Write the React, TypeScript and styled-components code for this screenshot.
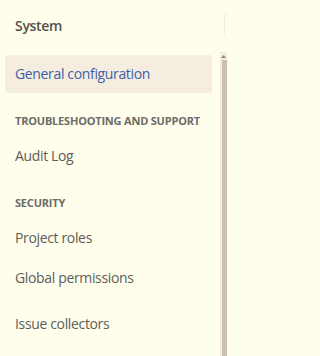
import styled, { createGlobalStyle } from 'styled-components';

const GlobalStyle = createGlobalStyle`
  html, body {
    margin: 0;
    padding: 0;
    background: #fffdec;
  }
  body {
    font-family: "Open Sans", "Noto Sans", sans-serif;
    overflow: hidden;
  }
`;

const Page = styled.div`
  display: flex;
  width: 227px;
  height: 356px;
  background: #fffdec;
  overflow: hidden;
`;

const Sidebar = styled.nav`
  width: 207px;
  flex-shrink: 0;
  padding: 16px 0 0 5px;
  display: flex;
  flex-direction: column;
`;

const Title = styled.div`
  height: 20px;
  line-height: 20px;
  padding-left: 10px;
  margin-bottom: 19px;
  font-size: 14px;
  font-weight: 600;
  letter-spacing: -0.3px;
  color: #52524e;
`;

const Group = styled.div<{ $gap: number }>`
  display: flex;
  flex-direction: column;
  gap: 2px;
  margin-top: ${(p) => p.$gap}px;
`;

const GroupHeading = styled.div`
  height: 16px;
  line-height: 16px;
  padding-left: 10px;
  margin-bottom: 6px;
  font-size: 11px;
  font-weight: 700;
  letter-spacing: -0.2px;
  color: #6c6b66;
  text-transform: uppercase;
  white-space: nowrap;
`;

const Item = styled.a<{ $selected?: boolean }>`
  display: flex;
  align-items: center;
  height: 38px;
  padding: 0 10px;
  border-radius: 3px;
  font-size: 14px;
  line-height: 20px;
  letter-spacing: -0.35px;
  text-decoration: none;
  color: ${(p) => (p.$selected ? '#4060a6' : '#5d5d59')};
  background: ${(p) => (p.$selected ? '#f5ede0' : 'transparent')};
`;

const Side = styled.div`
  flex: 1;
  display: flex;
  flex-direction: column;
  align-items: flex-end;
  padding-left: 8px;
`;

const Peek = styled.div`
  width: 2px;
  height: 22px;
  margin-top: 14px;
  border: 1px solid #f1eedf;
  border-right: none;
  border-radius: 12px 0 0 12px;
`;

const Track = styled.div`
  margin-top: 14px;
  flex: 1;
  width: 7px;
  display: flex;
  flex-direction: column;
  background: #f6ecdc;
`;

const Arrow = styled.div`
  height: 8px;
  display: flex;
  align-items: center;
  justify-content: flex-end;
  padding-right: 1px;
`;

const Thumb = styled.div`
  flex: 1;
  margin-left: 2px;
  background: #c9c0b3;
`;

const groups = [
  { heading: 'Troubleshooting and support', gap: 20, items: ['Audit Log'] },
  { heading: 'Security', gap: 20, items: ['Project roles', 'Global permissions'] },
  { heading: '', gap: 8, items: ['Issue collectors'] },
];

export default function App() {
  return (
    <Page>
      <GlobalStyle />
      <Sidebar>
        <Title>System</Title>
        <Group $gap={0}>
          <Item $selected>General configuration</Item>
        </Group>
        {groups.map((g) => (
          <Group key={g.items[0]} $gap={g.gap}>
            {g.heading && <GroupHeading>{g.heading}</GroupHeading>}
            {g.items.map((it) => (
              <Item key={it}>{it}</Item>
            ))}
          </Group>
        ))}
      </Sidebar>
      <Side>
        <Peek />
        <Track>
          <Arrow>
            <svg width="5" height="3" viewBox="0 0 5 3">
              <path d="M0 3 L2.5 0 L5 3 Z" fill="#8d877d" />
            </svg>
          </Arrow>
          <Thumb />
        </Track>
      </Side>
    </Page>
  );
}
